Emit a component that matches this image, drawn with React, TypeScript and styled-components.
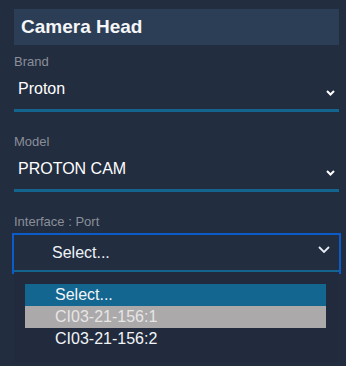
import React from 'react';
import styled, { createGlobalStyle } from 'styled-components';

const GlobalStyle = createGlobalStyle`
  html, body {
    margin: 0;
    padding: 0;
    background: #222d40;
  }
  body {
    font-family: 'Liberation Sans', Arial, sans-serif;
    color: #ffffff;
  }
`;

const Panel = styled.div`
  box-sizing: border-box;
  width: 346px;
  height: 366px;
  padding: 9px 7px 0 14px;
  background: #222d40;
`;

const Header = styled.div`
  height: 36px;
  padding-left: 7px;
  background: #2c3e56;
  font-size: 19px;
  font-weight: 700;
  line-height: 36px;
  color: #f4f6f8;
`;

const Field = styled.div<{ $first?: boolean }>`
  margin-top: ${({ $first }) => ($first ? '9px' : '22px')};
`;

const Label = styled.div`
  font-size: 13px;
  line-height: 15px;
  color: #8a8f98;
`;

const SelectRow = styled.div`
  display: flex;
  align-items: center;
  justify-content: space-between;
  height: 40px;
  padding: 0 4px;
  border-bottom: 3px solid #136590;
  font-size: 16px;
  line-height: 20px;
`;

const SelectWrap = styled.div`
  position: relative;
`;

const FocusedSelect = styled.div`
  display: flex;
  align-items: center;
  justify-content: space-between;
  margin-top: 6px;
  height: 35px;
  padding: 0 9px 0 38px;
  border-bottom: 2px solid #136590;
  outline: 2px solid #0b5bc8;
  font-size: 16px;
  line-height: 20px;
  color: #eef2f6;
`;

const Chevron = styled.svg<{ $small?: boolean }>`
  flex: none;
  margin-top: ${({ $small }) => ($small ? '8px' : '-6px')};
`;

const Menu = styled.div`
  position: absolute;
  top: 100%;
  left: 0;
  right: 0;
  padding: 12px 13px 12px 11px;
  background: #212b3d;
`;

const Option = styled.div<{ $state?: 'active' | 'hover' }>`
  height: 22px;
  padding-left: 30px;
  font-size: 16px;
  line-height: 22px;
  background: ${({ $state }) =>
    $state === 'active' ? '#136690' : $state === 'hover' ? '#aba9aa' : 'transparent'};
  color: ${({ $state }) => ($state === 'hover' ? '#e6e6e6' : '#f2f5f8')};
`;

const SmallChevron = () => (
  <Chevron $small width="9" height="6" viewBox="0 0 9 6">
    <path d="M1 1 L4.5 4.5 L8 1" fill="none" stroke="#ffffff" strokeWidth="2" />
  </Chevron>
);

const LargeChevron = () => (
  <Chevron width="12" height="7" viewBox="0 0 12 7">
    <path d="M1 1 L6 6 L11 1" fill="none" stroke="#e8edf3" strokeWidth="1.8" />
  </Chevron>
);

const App = () => {
  return (
    <>
      <GlobalStyle />
      <Panel>
        <Header>Camera Head</Header>
        <Field $first>
          <Label>Brand</Label>
          <SelectRow>
            <span>Proton</span>
            <SmallChevron />
          </SelectRow>
        </Field>
        <Field>
          <Label>Model</Label>
          <SelectRow>
            <span>PROTON CAM</span>
            <SmallChevron />
          </SelectRow>
        </Field>
        <Field>
          <Label>Interface : Port</Label>
          <SelectWrap>
            <FocusedSelect>
              <span>Select...</span>
              <LargeChevron />
            </FocusedSelect>
            <Menu>
              <Option $state="active">Select...</Option>
              <Option $state="hover">CI03-21-156:1</Option>
              <Option>CI03-21-156:2</Option>
            </Menu>
          </SelectWrap>
        </Field>
      </Panel>
    </>
  );
};

export default App;
